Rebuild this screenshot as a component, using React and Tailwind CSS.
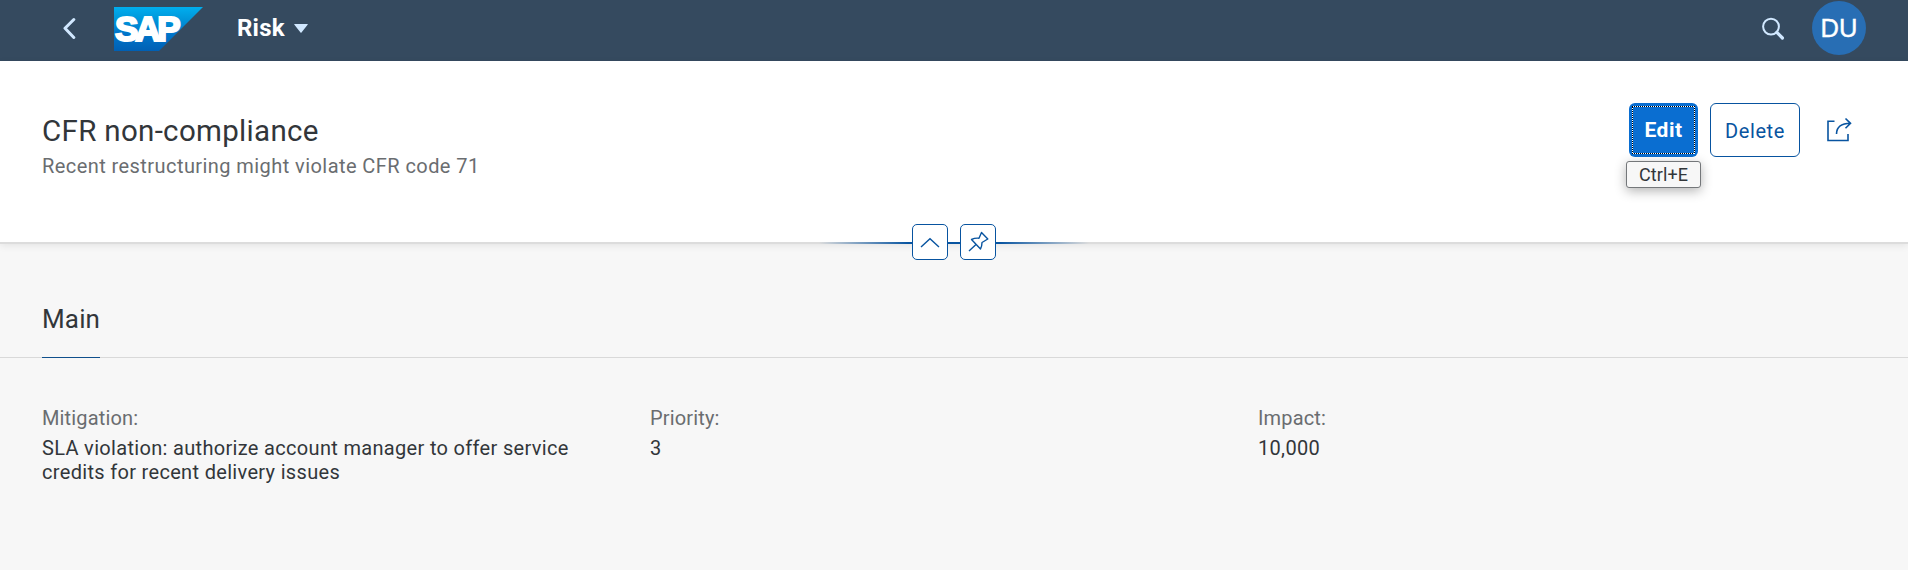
function ShellBar() {
  return (
    <header className="flex h-[61px] items-start bg-[#354a5f] text-white">
      <svg className="mt-[17px] ml-[61px] h-[22px] w-[16px]" viewBox="0 0 16 22" fill="none" stroke="#d1e8ff" strokeWidth="3" strokeLinecap="round" strokeLinejoin="round">
        <path d="M12.800 2.500 4 11.300 12.800 20.500" />
      </svg>
      <svg className="mt-[7px] ml-[37px] h-[44px] w-[89px]" viewBox="0 0 89 44">
        <defs>
          <linearGradient id="sap" x1="0" y1="0" x2="0" y2="1">
            <stop offset="0" stopColor="#00aeef" />
            <stop offset=".25" stopColor="#0099dc" />
            <stop offset=".6" stopColor="#0076cb" />
            <stop offset="1" stopColor="#0060b4" />
          </linearGradient>
        </defs>
        <path d="M0 0H89L45 44H0Z" fill="url(#sap)" />
        <text x="1" y="34" fill="#fff" stroke="#fff" strokeWidth="2.2" fontFamily="Liberation Sans, sans-serif" fontWeight="700" fontSize="35" letterSpacing="-3.2">SAP</text>
      </svg>
      <div className="mt-[13px] ml-[34px] flex items-center gap-[9px]">
        <span className="text-[24px] leading-[30px] font-bold tracking-[0.2px]">Risk</span>
        <svg className="h-[9px] w-[14px]" viewBox="0 0 14 9"><path d="M.4 0H13.6Q14 .3 13.6 .8L7.5 8.6Q7 9 6.5 8.6L.4.8Q0 .3.4 0Z" fill="#d1e8ff" /></svg>
      </div>
      <svg className="mt-[17px] ml-auto h-[24px] w-[24px]" viewBox="0 0 24 24" fill="none" stroke="#d1e8ff">
        <circle cx="10" cy="9.6" r="7.9" strokeWidth="2" />
        <path d="M15.8 15.4 21.4 21" strokeWidth="3.2" strokeLinecap="round" />
      </svg>
      <div className="mt-px mr-[42px] ml-[27px] flex size-[54px] items-center justify-center rounded-full bg-[#286eb4] pt-px font-['Liberation_Sans',sans-serif] text-[25.5px] [-webkit-text-stroke:0.4px_white]">DU</div>
    </header>
  );
}

function Field({ label, children }) {
  return (
    <div className="w-[608px]">
      <div className="leading-[30px] tracking-[0.15px] text-[#6a6d70]">{label}</div>
      <div className="mt-[3px] w-[560px] leading-[24px] tracking-[0.32px]">{children}</div>
    </div>
  );
}

export default function App() {
  return (
    <div className="h-[570px] overflow-hidden bg-[#f7f7f7] font-['Roboto',sans-serif] text-[20px] text-[#32363a]">
      <ShellBar />
      <section className="relative flex h-[181px] justify-between bg-white pl-[42px] shadow-[0_2px_0_#dcdcdc,0_3px_8px_#00000018]">
        <div className="pt-[51px]">
          <h1 className="text-[29.5px] leading-[38px] tracking-[0.32px]">CFR non-compliance</h1>
          <p className="-mt-px leading-[34px] tracking-[0.43px] text-[#6a6d70]">Recent restructuring might violate CFR code 71</p>
        </div>
        <div className="mt-[42px] mr-[54px] flex h-[54px] items-center">
          <div className="relative">
            <button className="flex h-[54px] w-[69px] items-center justify-center rounded-[6px] bg-[#0a6ed1] pt-[2px] text-[21px] font-bold tracking-[0.5px] text-white">Edit</button>
            <svg className="pointer-events-none absolute inset-0 h-[54px] w-[69px]" viewBox="0 0 69 54" fill="none" shapeRendering="crispEdges">
              <rect x="3.5" y="3.5" width="62" height="47" stroke="#000" />
              <rect x="3.5" y="3.5" width="62" height="47" stroke="#fff" strokeDasharray="1 1" />
            </svg>
            <div className="absolute top-[58px] left-[-3px] flex h-[27px] w-[75px] items-center justify-center rounded-[3px] border border-[#74777a] bg-[#f7f7f7] text-[18px] tracking-[0.1px] shadow-[0_3px_12px_#0000004d]">Ctrl+E</div>
          </div>
          <button className="ml-[12px] h-[54px] w-[90px] rounded-[6px] border border-[#0854a0] pt-px tracking-[0.6px] text-[#0854a0]">Delete</button>
          <svg className="ml-[26px] h-[26px] w-[28px]" viewBox="0 0 28 26" fill="none" stroke="#0854a0" strokeWidth="1.6">
            <path d="M8.5 4.2H2V23.500H22V17" />
            <path d="M10.5 17C10.5 10.500 14.5 6.500 24.5 6.300M19.5 1.500 24.5 6.300 19.5 11.200" />
          </svg>
        </div>
        <div className="absolute top-[163px] left-1/2 flex h-[36px] w-[270px] -translate-x-1/2 items-center justify-center gap-[12px] bg-[linear-gradient(90deg,transparent,#0854a0_33%,#0854a0_67%,transparent)] bg-[length:100%_2px] bg-[position:0_18px] bg-no-repeat">
          <button className="size-[36px] rounded-[5px] border border-[#0854a0] bg-white">
            <svg className="size-[34px]" viewBox="0 0 34 34" fill="none" stroke="#0854a0" strokeWidth="1.4"><path d="M8 22 17 13.7 26 22" /></svg>
          </button>
          <button className="size-[36px] rounded-[5px] border border-[#0854a0] bg-white">
            <svg className="size-[34px]" viewBox="0 0 34 34" fill="none" stroke="#0854a0" strokeWidth="1.4" strokeLinejoin="round">
              <path d="M8 26 15 19.500M10.500 14.500Q14 12.800 18 13.200L20.500 7.500 26.800 14 21 17.500Q21 21 19.500 24Z" />
            </svg>
          </button>
        </div>
      </section>
      <nav className="flex h-[116px] items-end border-b border-[#d9d9d9] pl-[42px]">
        <div className="-mb-px h-[58px] border-b border-[#10508c] text-[26px] leading-[38px] tracking-[0.15px]">Main</div>
      </nav>
      <main className="flex pt-[45px] pl-[42px]">
        <Field label="Mitigation:">SLA violation: authorize account manager to offer service credits for recent delivery issues</Field>
        <Field label="Priority:">3</Field>
        <Field label="Impact:">10,000</Field>
      </main>
    </div>
  );
}
